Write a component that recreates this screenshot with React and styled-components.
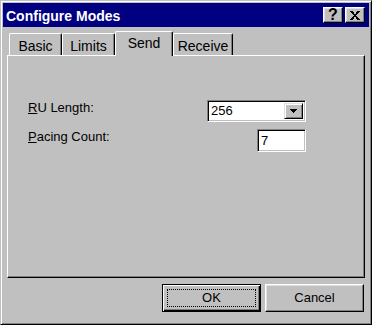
import React from "react";
import styled, { createGlobalStyle } from "styled-components";

const Global = createGlobalStyle`
  html, body { margin: 0; padding: 0; background: #c0c0c0; }
  body { font-family: "Liberation Sans", Arial, sans-serif; }
  * { box-sizing: border-box; }
`;

const Window = styled.div`
  width: 372px;
  height: 325px;
  background: #c0c0c0;
  border: 1px solid;
  border-color: #c0c0c0 #000 #000 #c0c0c0;
  box-shadow: inset 1px 1px #fff, inset -1px -1px #808080;
  padding: 2px;
  display: flex;
  flex-direction: column;
`;

const TitleBar = styled.div`
  height: 24px;
  background: #000080;
  color: #fff;
  display: flex;
  align-items: center;
  padding: 0 4px 0 3px;
  font-weight: bold;
  font-size: 14px;
  flex-shrink: 0;
`;

const Title = styled.div`
  flex: 1;
  white-space: nowrap;
  line-height: 16px;
  padding-top: 1px;
`;

const TitleButton = styled.div`
  width: 20px;
  height: 16px;
  margin-left: 2px;
  background: #c0c0c0;
  border: 1px solid;
  border-color: #fff #000 #000 #fff;
  box-shadow: inset -1px -1px #808080, inset 1px 1px #dfdfdf;
  display: flex;
  align-items: center;
  justify-content: center;
  color: #000;
  font-size: 16px;
  font-weight: bold;
  line-height: 14px;
`;

const Body = styled.div`
  flex: 1;
  display: flex;
  flex-direction: column;
  padding: 4px 4px 0 4px;
`;

const TabRow = styled.div`
  height: 24px;
  display: flex;
  align-items: flex-end;
  padding-left: 2px;
  position: relative;
  z-index: 1;
`;

const Tab = styled.div`
  width: ${(p) => p.$w}px;
  height: ${(p) => (p.$active ? 25 : 22)}px;
  margin-bottom: ${(p) => (p.$active ? -1 : 0)}px;
  background: #c0c0c0;
  border-top: 1px solid #fff;
  border-left: 1px solid #fff;
  border-right: 1px solid #000;
  border-top-left-radius: 2px;
  border-top-right-radius: 2px;
  box-shadow: inset -1px 0 #808080;
  font-size: 14px;
  color: #000;
  display: flex;
  justify-content: center;
  padding-top: ${(p) => (p.$active ? 4 : 5)}px;
  line-height: 14px;
`;

const Panel = styled.div`
  height: 223px;
  background: #c0c0c0;
  border: 1px solid;
  border-color: #fff #000 #000 #fff;
  box-shadow: inset -1px -1px #808080;
  padding: 44px 0 0 20px;
`;

const Form = styled.div`
  display: grid;
  grid-template-columns: 179px 99px;
  row-gap: 7px;
`;

const Label = styled.div`
  font-size: 13px;
  line-height: 13px;
  padding-top: 1px;
  color: #000;
  u { text-decoration: underline; }
`;

const Sunken = styled.div`
  height: ${(p) => p.$h}px;
  width: ${(p) => p.$w}px;
  justify-self: end;
  background: #fff;
  border: 1px solid;
  border-color: #808080 #fff #fff #808080;
  box-shadow: inset 1px 1px #000, inset -1px -1px #c0c0c0;
  display: flex;
  align-items: center;
  padding: 0 2px 0 3px;
  font-size: 13px;
  color: #000;
`;

const Value = styled.div`
  flex: 1;
  line-height: 14px;
`;

const DropButton = styled.div`
  width: 19px;
  height: ${(p) => p.$h}px;
  background: #c0c0c0;
  border: 1px solid;
  border-color: #dfdfdf #000 #000 #dfdfdf;
  box-shadow: inset 1px 1px #fff, inset -1px -1px #808080;
  display: flex;
  align-items: center;
  justify-content: center;
`;

const ButtonRow = styled.div`
  display: flex;
  justify-content: flex-end;
  gap: 4px;
  margin-top: 6px;
  padding-right: 1px;
`;

const Button = styled.div`
  width: 99px;
  height: 28px;
  background: #c0c0c0;
  border: 1px solid;
  border-color: ${(p) => (p.$default ? "#000" : "#fff #000 #000 #fff")};
  box-shadow: ${(p) =>
    p.$default
      ? "inset 1px 1px #fff, inset -1px -1px #000, inset -2px -2px #808080"
      : "inset -1px -1px #808080, inset 1px 1px #dfdfdf"};
  display: flex;
  align-items: center;
  justify-content: center;
  font-size: 13px;
  color: #000;
  position: relative;
`;

const Focus = styled.div`
  position: absolute;
  left: 4px;
  top: 4px;
  right: 4px;
  bottom: 4px;
  border: 1px dotted #000;
`;

const ButtonText = styled.span`
  position: relative;
  line-height: 14px;
`;

export default function App() {
  return (
    <>
      <Global />
      <Window>
        <TitleBar>
          <Title>Configure Modes</Title>
          <TitleButton>?</TitleButton>
          <TitleButton>
            <svg width="10" height="9" viewBox="0 0 10 9" shapeRendering="crispEdges">
              <path d="M0 0h3v1H0zM7 0h3v1H7zM1 1h3v1H1zM6 1h3v1H6zM2 2h2v1H2zM6 2h2v1H6zM3 3h4v1H3zM4 4h2v1H4zM3 5h4v1H3zM2 6h2v1H2zM6 6h2v1H6zM1 7h3v1H1zM6 7h3v1H6zM0 8h3v1H0zM7 8h3v1H7z" fill="#000" />
            </svg>
          </TitleButton>
        </TitleBar>
        <Body>
          <TabRow>
            <Tab $w={53}>Basic</Tab>
            <Tab $w={53}>Limits</Tab>
            <Tab $w={58} $active>Send</Tab>
            <Tab $w={60}>Receive</Tab>
          </TabRow>
          <Panel>
            <Form>
              <Label>
                <u>R</u>U Length:
              </Label>
              <Sunken $w={99} $h={22}>
                <Value>256</Value>
                <DropButton $h={16}>
                  <svg width="7" height="4" viewBox="0 0 7 4" shapeRendering="crispEdges">
                    <path d="M0 0h7v1H0zM1 1h5v1H1zM2 2h3v1H2zM3 3h1v1H3z" fill="#000" />
                  </svg>
                </DropButton>
              </Sunken>
              <Label>
                <u>P</u>acing Count:
              </Label>
              <Sunken $w={49} $h={23}>
                <Value>7</Value>
              </Sunken>
            </Form>
          </Panel>
          <ButtonRow>
            <Button $default>
              <Focus />
              <ButtonText>OK</ButtonText>
            </Button>
            <Button>
              <ButtonText>Cancel</ButtonText>
            </Button>
          </ButtonRow>
        </Body>
      </Window>
    </>
  );
}
